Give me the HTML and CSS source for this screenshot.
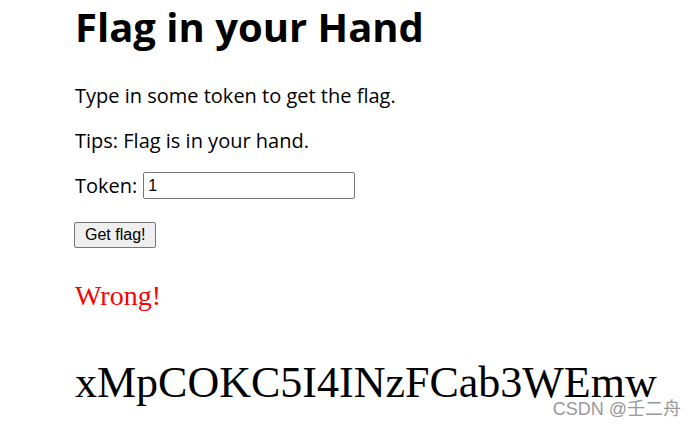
FILE: index.html
```html
<!DOCTYPE html>
<html lang="en">
<head>
    <meta charset="UTF-8">
    <title>Flag in your Hand</title>
    <link rel="stylesheet" href="styles.css">
</head>
<body>
    <div class="page">
        <h1>Flag in your Hand</h1>
        <p>Type in some token to get the flag.</p>
        <p>Tips: Flag is in your hand.</p>
        <p class="token-row">
            <label for="token">Token:</label>
            <input type="text" id="token" value="1">
        </p>
        <p>
            <button class="get-btn">Get flag!</button>
        </p>
        <p class="info">Wrong!</p>
        <p class="flag">xMpCOKC5I4INzFCab3WEmw</p>
    </div>
    <div class="watermark">CSDN @壬二舟</div>
</body>
</html>
```

FILE: styles.css
```css
body {
    margin: 0;
    font-family: 'Open Sans', 'Noto Sans', sans-serif;
    font-size: 20px;
    color: #000;
    background: #fff;
    height: 428px;
    overflow: hidden;
    position: relative;
}
.page {
    padding: 1px 0 0 75px;
}
h1 {
    font-size: 40px;
    font-weight: 700;
    margin: 0 0 29px;
    line-height: 52px;
}
p {
    margin: 0 0 18px;
    line-height: 27px;
}
.token-row {
    display: flex;
    align-items: center;
    gap: 6px;
    margin-bottom: 20px;
}
.token-row input {
    width: 212px;
    height: 27px;
    box-sizing: border-box;
    border: 1px solid #767676;
    border-radius: 2px;
    padding: 1px 4px;
    font-family: 'Liberation Sans', Arial, sans-serif;
    font-size: 16px;
}
.get-btn {
    font-family: 'Liberation Sans', Arial, sans-serif;
    font-size: 16px;
    height: 26px;
    padding: 0 10px;
    margin-left: -1px;
    border: 1px solid #767676;
    border-radius: 2px;
    background: #efefef;
    color: #000;
}
.info {
    font-family: 'Liberation Serif', serif;
    font-size: 28px;
    color: #f00;
    margin-top: 34px;
}
.flag {
    font-family: 'Liberation Serif', serif;
    font-size: 44px;
    margin-top: 60px;
}
.watermark {
    position: absolute;
    right: 16px;
    bottom: 8px;
    font-family: 'Liberation Sans', 'Noto Sans CJK SC', sans-serif;
    font-size: 18px;
    color: #999;
}
```
